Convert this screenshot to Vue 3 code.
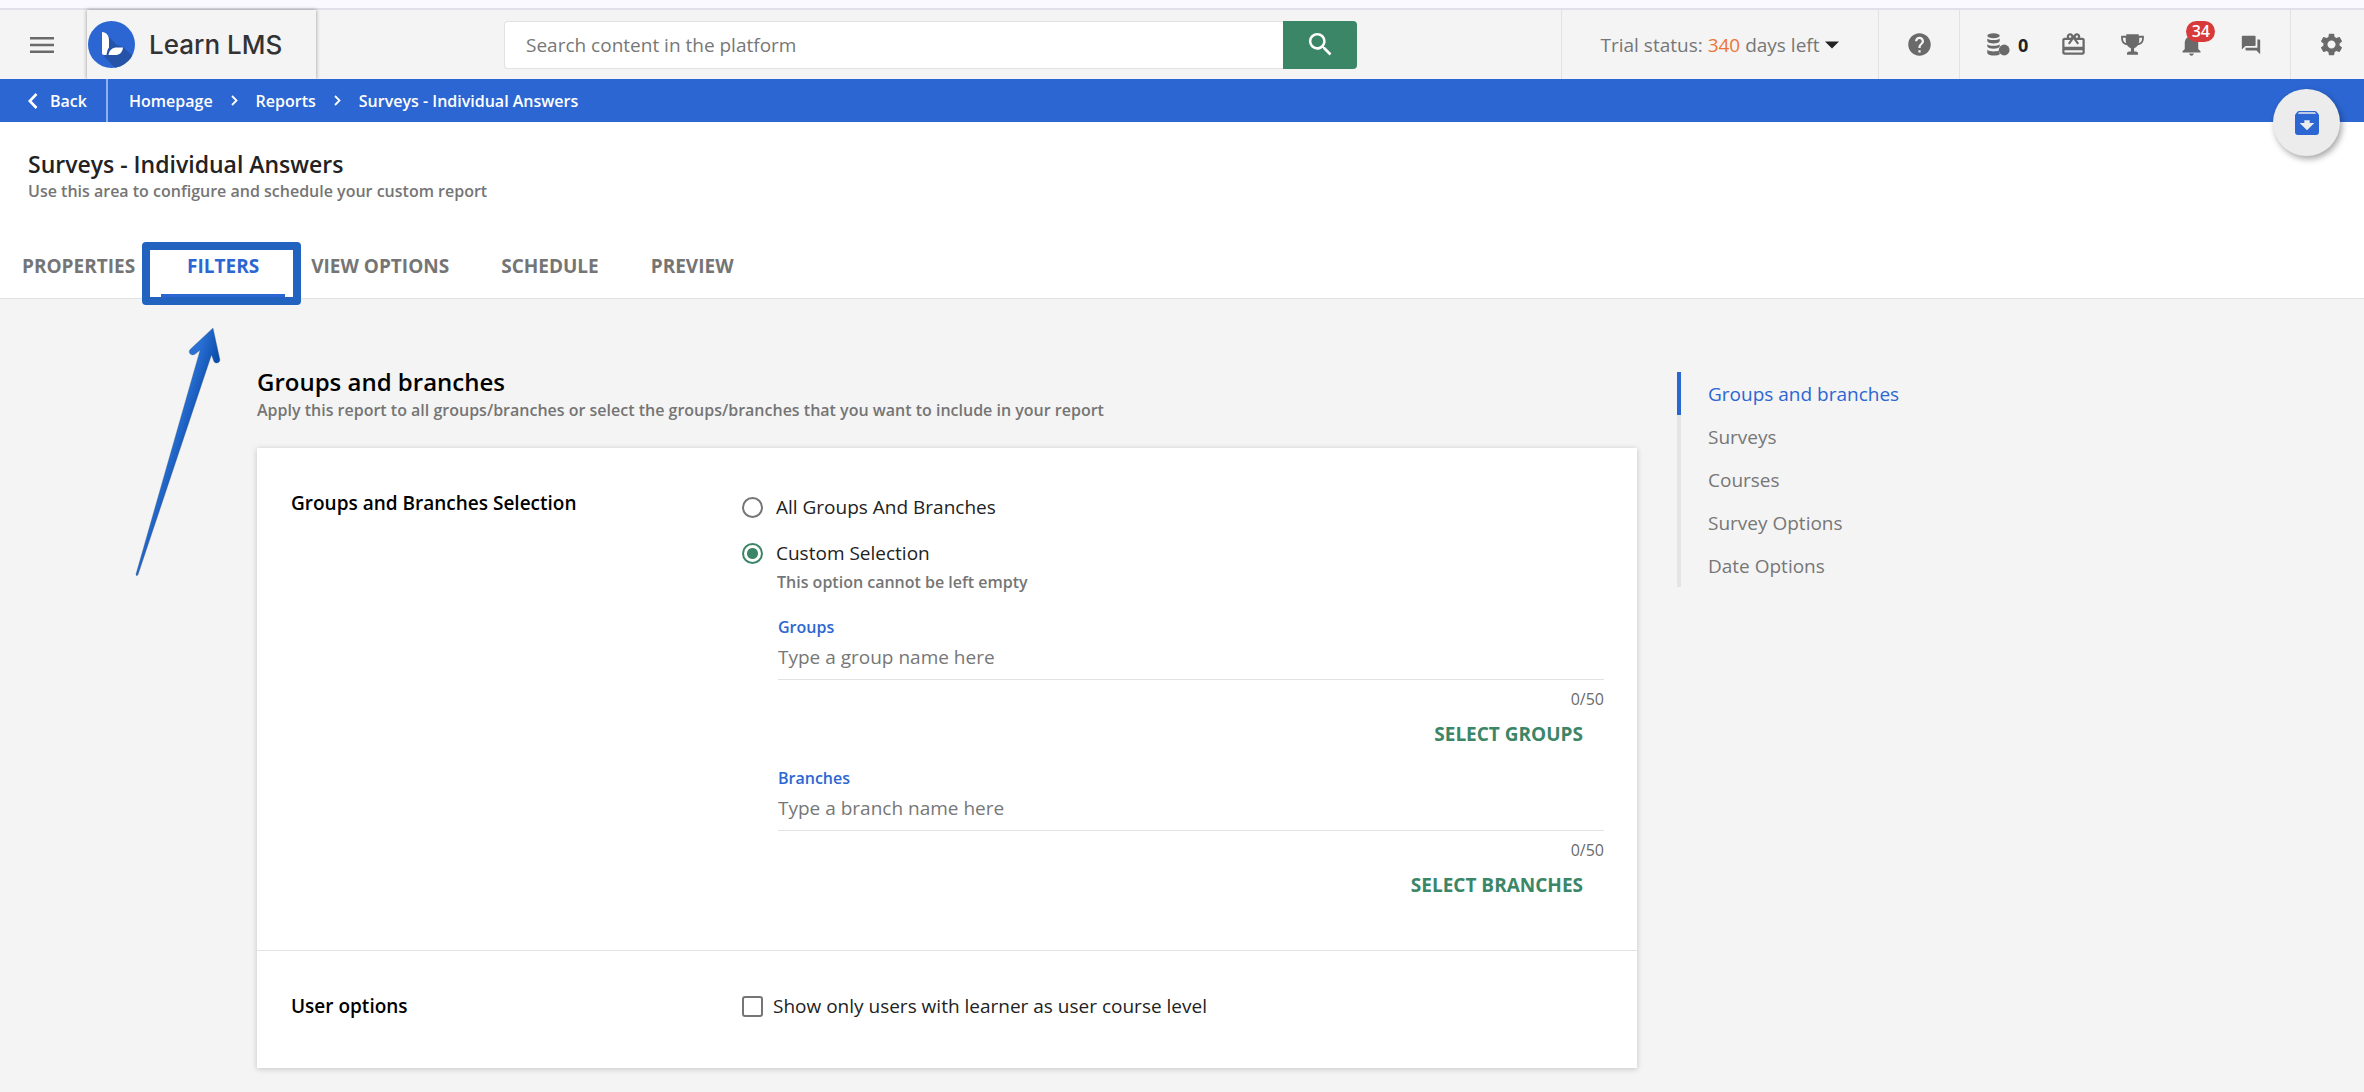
<script setup>
import { ref } from 'vue'

const tabs = ['Properties', 'Filters', 'View options', 'Schedule', 'Preview']
const activeTab = ref('Filters')

const sections = ['Groups and branches', 'Surveys', 'Courses', 'Survey Options', 'Date Options']
const activeSection = ref('Groups and branches')

const selection = ref('custom')
const learnersOnly = ref(false)

const pickers = [
  { id: 'groups', label: 'Groups', placeholder: 'Type a group name here', action: 'Select groups' },
  { id: 'branches', label: 'Branches', placeholder: 'Type a branch name here', action: 'Select branches' },
]
</script>

<template>
  <div class="page">
    <div class="strip"></div>

    <header class="topbar">
      <button class="icon-btn menu" type="button" aria-label="Menu">
        <svg width="24" height="16" viewBox="0 0 24 16"><path d="M0 1.3h24M0 8h24M0 14.7h24" stroke="#6a6a6a" stroke-width="2.4" /></svg>
      </button>
      <a class="logo" href="#">
        <svg width="47" height="47" viewBox="0 0 47 47" aria-hidden="true">
          <defs><clipPath id="disc"><circle cx="23.500" cy="23.500" r="23.500" /></clipPath></defs>
          <circle cx="23.500" cy="23.500" r="23.500" fill="#2c66d2" />
          <path clip-path="url(#disc)" d="M20 15l9 9 6 2 12 11-18 12-14-15z" fill="#2453a8" />
          <path d="M14 11c4.500.5 7 3.500 7 8v7.500c-1.500 2-2 4-2.500 7.500H16c-1.500 0-2-.8-2-2z" fill="#fff" />
          <path d="M20.500 34c.5-5 4-7.500 8.500-7.500h6c-.5 5-3.500 7.500-8 7.500z" fill="#fff" />
        </svg>
        <span>Learn LMS</span>
      </a>

      <form class="search" role="search" @submit.prevent>
        <input type="text" placeholder="Search content in the platform" aria-label="Search content in the platform" />
        <button type="submit" aria-label="Search">
          <svg width="31" height="31" viewBox="0 0 24 24"><path fill="#fff" d="M15.500 14h-.79l-.28-.27A6.471 6.471 0 0 0 16 9.500 6.500 6.500 0 1 0 9.500 16c1.610 0 3.090-.59 4.230-1.570l.27.28v.79l5 4.990L20.490 19l-4.990-5zm-6 0C7.010 14 5 11.990 5 9.500S7.010 5 9.500 5 14 7.010 14 9.500 11.990 14 9.500 14z" /></svg>
        </button>
      </form>

      <div class="tools">
        <button class="tool trial" type="button">
          <span>Trial status: <em>340</em> days left</span>
          <svg width="14" height="8" viewBox="0 0 14 8"><path d="M0 .5h14L7 7.500z" fill="#222" /></svg>
        </button>
        <button class="tool help" type="button" aria-label="Help">
          <svg class="glyph" viewBox="0 0 24 24"><path d="M12 2C6.480 2 2 6.480 2 12s4.480 10 10 10 10-4.480 10-10S17.520 2 12 2zm1 17h-2v-2h2v2zm2.070-7.750l-.9.92C13.450 12.900 13 13.500 13 15h-2v-.5c0-1.100.45-2.100 1.170-2.830l1.240-1.260c.37-.36.59-.86.59-1.410 0-1.100-.9-2-2-2s-2 .9-2 2H8c0-2.210 1.790-4 4-4s4 1.790 4 4c0 .88-.36 1.680-.93 2.250z" /></svg>
        </button>
        <div class="tool icons">
          <button class="icon-btn coins" type="button" aria-label="Coins">
            <svg width="23" height="23" viewBox="0 0 23 23" fill="#6a6a6a">
              <ellipse cx="6.500" cy="2.700" rx="6.200" ry="2.500" />
              <path d="M.3 5.600c2 2 10.400 2 12.400 0v2.600c-1.400 2.900-11 2.900-12.400 0zM.3 11.200c2 2 10.400 2 12.400 0v2.200c-1.400 3-11 3-12.400 0zM.3 16.800c2 2 9 2 11.500.7.200 1.600.7 2.700 1.200 3.500-2 2.200-11.500 2.300-12.700-.8z" />
              <circle cx="17.200" cy="17" r="5.400" />
            </svg>
            <b>0</b>
          </button>
          <button class="icon-btn" type="button" aria-label="Rewards">
            <svg class="glyph" viewBox="0 0 24 24"><path d="M20 6h-2.180c.11-.31.18-.65.18-1 0-1.660-1.340-3-3-3-1.050 0-1.960.54-2.500 1.350l-.5.67-.5-.68C10.960 2.540 10.050 2 9 2 7.340 2 6 3.340 6 5c0 .35.07.69.18 1H4c-1.110 0-1.990.89-1.990 2L2 19c0 1.110.89 2 2 2h16c1.110 0 2-.89 2-2V8c0-1.110-.89-2-2-2zm-5-2c.55 0 1 .45 1 1s-.45 1-1 1-1-.45-1-1 .45-1 1-1zM9 4c.55 0 1 .45 1 1s-.45 1-1 1-1-.45-1-1 .45-1 1-1zm11 15H4v-2h16v2zm0-5H4V8h5.080L7 10.830 8.620 12 11 8.760l1-1.360 1 1.360L15.380 12 17 10.830 14.920 8H20v6z" /></svg>
          </button>
          <button class="icon-btn" type="button" aria-label="Leaderboard">
            <svg class="glyph" viewBox="0 0 24 24">
              <path d="M6.500 2.800h11v1.500h4.600v2.200c0 3.600-2.400 6-5.400 6.200-.8 1.300-1.900 2.200-3.300 2.600v2.900h1.500c1.300 0 2 .8 2 2v1H7.100v-1c0-1.200.8-2 2-2h1.500v-2.900c-1.400-.4-2.500-1.300-3.300-2.600-3-.2-5.400-2.600-5.400-6.200V4.300h4.600zM3.500 6v.7c0 2.100 1.100 3.600 2.900 4.200-.4-1.300-.5-3-.4-4.900zm17 0H18c.1 1.900 0 3.600-.4 4.900 1.800-.6 2.900-2.100 2.900-4.200z" />
            </svg>
          </button>
          <button class="icon-btn bell" type="button" aria-label="Notifications">
            <svg class="glyph" viewBox="0 0 24 24"><path d="M12 22c1.100 0 2-.9 2-2h-4c0 1.100.89 2 2 2zm6-6v-5c0-3.070-1.640-5.640-4.500-6.320V4c0-.83-.67-1.500-1.500-1.500s-1.500.67-1.500 1.500v.68C7.630 5.360 6 7.920 6 11v5l-2 2v1h16v-1l-2-2z" /></svg>
            <span class="badge">34</span>
          </button>
          <button class="icon-btn" type="button" aria-label="Messages">
            <svg class="glyph small" viewBox="0 0 24 24"><path d="M21 6h-2v9H6v2c0 .55.45 1 1 1h11l4 4V7c0-.55-.45-1-1-1zm-4 6V3c0-.55-.45-1-1-1H3c-.55 0-1 .45-1 1v14l4-4h10c.55 0 1-.45 1-1z" /></svg>
          </button>
        </div>
        <button class="tool gear" type="button" aria-label="Settings">
          <svg class="glyph" viewBox="0 0 24 24"><path d="M19.140 12.940c.04-.3.06-.61.06-.94 0-.32-.02-.64-.07-.94l2.030-1.580c.18-.14.23-.41.12-.61l-1.920-3.320c-.12-.22-.37-.29-.59-.22l-2.390.96c-.5-.38-1.030-.7-1.620-.94l-.36-2.540c-.04-.24-.24-.41-.48-.41h-3.840c-.24 0-.43.17-.47.41l-.36 2.540c-.59.24-1.130.57-1.620.94l-2.390-.96c-.22-.08-.47 0-.59.22L2.740 8.870c-.12.21-.08.47.12.61l2.030 1.580c-.05.3-.09.63-.09.94s.02.64.07.94l-2.030 1.580c-.18.14-.23.41-.12.61l1.920 3.320c.12.22.37.29.59.22l2.390-.96c.5.38 1.030.7 1.620.94l.36 2.540c.05.24.24.41.48.41h3.840c.24 0 .44-.17.47-.41l.36-2.540c.59-.24 1.130-.56 1.620-.94l2.390.96c.22.08.47 0 .59-.22l1.920-3.320c.12-.22.07-.47-.12-.61l-2.010-1.580zM12 15.600c-1.980 0-3.600-1.620-3.600-3.600s1.620-3.600 3.600-3.600 3.600 1.620 3.600 3.600-1.620 3.600-3.600 3.600z" /></svg>
        </button>
      </div>
    </header>

    <div class="crumbs">
      <a class="back" href="#">
        <svg width="10" height="16" viewBox="0 0 10 16"><path d="M8.500 1L1.800 8l6.700 7" fill="none" stroke="#fff" stroke-width="2.600" /></svg>
        Back
      </a>
      <nav class="trail" aria-label="Breadcrumb">
        <a href="#">Homepage</a>
        <svg width="7" height="11" viewBox="0 0 7 11"><path d="M1 1l4.500 4.500L1 10" fill="none" stroke="#fff" stroke-width="1.800" /></svg>
        <a href="#">Reports</a>
        <svg width="7" height="11" viewBox="0 0 7 11"><path d="M1 1l4.500 4.500L1 10" fill="none" stroke="#fff" stroke-width="1.800" /></svg>
        <a href="#">Surveys - Individual Answers</a>
      </nav>
      <button class="fab" type="button" aria-label="Archive">
        <svg width="32" height="32" viewBox="0 0 24 24"><path fill="#2c66d2" d="M20.540 5.230l-1.390-1.680C18.880 3.210 18.470 3 18 3H6c-.47 0-.88.21-1.160.55L3.460 5.230C3.170 5.570 3 6.020 3 6.500V19c0 1.100.9 2 2 2h14c1.100 0 2-.9 2-2V6.500c0-.48-.17-.93-.46-1.270zM12 17.500L6.500 12H10v-2h4v2h3.500L12 17.500zM5.120 5l.81-1h12l.94 1H5.120z" /></svg>
      </button>
    </div>

    <section class="heading">
      <h1>Surveys - Individual Answers</h1>
      <p>Use this area to configure and schedule your custom report</p>
      <nav class="tabs">
        <a
          v-for="tab in tabs"
          :key="tab"
          href="#"
          :class="{ active: tab === activeTab }"
          @click.prevent="activeTab = tab"
        >
          {{ tab }}
          <template v-if="tab === 'Filters'">
            <span class="marker"></span>
            <svg class="arrow" width="88" height="256" viewBox="0 0 88 256" aria-hidden="true">
              <defs>
                <linearGradient id="shaft" gradientUnits="userSpaceOnUse" x1="42" y1="100" x2="62" y2="106">
                  <stop offset="0" stop-color="#2a70d4" />
                  <stop offset="1" stop-color="#0a4cac" />
                </linearGradient>
              </defs>
              <path d="M79 4L56.500 25c-3.500 3.500.5 7.500 4.500 5.200l5-4L2 250c-.4 2 1.500 2.300 2.100.6L77.500 31l2.200 6c1.300 3.500 6.500 2.400 6.200-1.500z" fill="url(#shaft)" stroke="#5b6470" stroke-opacity=".5" stroke-width=".6" />
            </svg>
          </template>
        </a>
      </nav>
    </section>

    <main class="main">
      <div class="content">
        <h2>Groups and branches</h2>
        <p class="lead">Apply this report to all groups/branches or select the groups/branches that you want to include in your report</p>

        <div class="card">
          <div class="row groups">
            <h3>Groups and Branches Selection</h3>
            <div class="controls choices">
              <label class="option">
                <input v-model="selection" type="radio" name="selection" value="all" />
                All Groups And Branches
              </label>
              <label class="option">
                <input v-model="selection" type="radio" name="selection" value="custom" />
                Custom Selection
              </label>
              <p class="hint">This option cannot be left empty</p>
              <div v-for="picker in pickers" :key="picker.id" class="picker">
                <label :for="picker.id">{{ picker.label }}</label>
                <input :id="picker.id" type="text" :placeholder="picker.placeholder" />
                <span class="count">0/50</span>
                <button type="button">{{ picker.action }}</button>
              </div>
            </div>
          </div>
          <div class="row">
            <h3>User options</h3>
            <div class="controls">
              <label class="option check">
                <input v-model="learnersOnly" type="checkbox" />
                Show only users with learner as user course level
              </label>
            </div>
          </div>
        </div>
      </div>

      <nav class="side" aria-label="Sections">
        <a
          v-for="item in sections"
          :key="item"
          href="#"
          :class="{ active: item === activeSection }"
          @click.prevent="activeSection = item"
        >{{ item }}</a>
      </nav>
    </main>
  </div>
</template>

<style>
body {
  background: #f4f4f4;
}
</style>

<style scoped>
.page,
.page * {
  box-sizing: border-box;
}

.page {
  min-height: 100vh;
  background: #f4f4f4;
  color: #222;
  font-family: "Open Sans", "Noto Sans", sans-serif;
  font-size: 19px;
}

h1,
h2,
h3,
p {
  margin: 0;
}

a {
  color: inherit;
  text-decoration: none;
}

button {
  margin: 0;
  padding: 0;
  border: 0;
  background: none;
  color: inherit;
  font: inherit;
  cursor: pointer;
}

input {
  font: inherit;
}

svg {
  display: block;
  flex: none;
}

.strip {
  height: 10px;
  background: #f9f9ff;
  border-bottom: 2px solid #e0e0ea;
}

/* Top bar */
.topbar {
  display: flex;
  align-items: center;
  height: 69px;
}

.icon-btn {
  display: flex;
  align-items: center;
  justify-content: center;
  min-width: 27px;
  height: 27px;
}

.menu {
  margin: 0 32px 0 28px;
}

.logo {
  display: flex;
  align-items: center;
  gap: 14px;
  width: 229px;
  height: 69px;
  padding-left: 1px;
  box-shadow: 0 0 4px rgba(0, 0, 0, 0.4);
  color: #333;
  font-family: Inter, sans-serif;
  font-size: 26px;
  font-weight: 500;
}

.search {
  display: flex;
  flex: 1;
  height: 48px;
  margin: 0 204px 0 188px;
}

.search input {
  flex: 1;
  min-width: 0;
  padding: 0 21px;
  border: 1px solid #e2e2e2;
  border-right: 0;
  border-radius: 4px 0 0 4px;
  background: #fff;
  outline: none;
}

input::placeholder {
  color: #777;
  opacity: 1;
}

.search button {
  display: flex;
  align-items: center;
  justify-content: center;
  width: 74px;
  border-radius: 0 4px 4px 0;
  background: #3c8668;
}

.tools {
  display: flex;
  flex: none;
  height: 69px;
}

.tool {
  display: flex;
  align-items: center;
  justify-content: center;
  border-left: 1px solid #e2e2e2;
}

.trial {
  gap: 6px;
  width: 317px;
  color: #777;
}

.trial em {
  color: #ec7436;
  font-style: normal;
}

.help {
  width: 81px;
}

.icons {
  justify-content: flex-start;
  gap: 32px;
  width: 331px;
  padding-left: 27px;
}

.gear {
  justify-content: flex-start;
  width: 74px;
  padding-left: 27px;
}

.glyph {
  width: 27px;
  height: 27px;
  fill: #6a6a6a;
}

.glyph.small {
  width: 22px;
  height: 22px;
}

.coins {
  gap: 8px;
}

.coins b {
  color: #222;
  font-size: 18px;
  font-weight: 700;
}

.bell {
  position: relative;
}

.badge {
  position: absolute;
  top: -10px;
  left: 8px;
  width: 29px;
  height: 21px;
  border-radius: 11px;
  background: #d63a3a;
  color: #fff;
  font-size: 16px;
  font-weight: 600;
  line-height: 21px;
  text-align: center;
}

/* Breadcrumb bar */
.crumbs {
  position: relative;
  display: flex;
  height: 43px;
  background: #2c66d2;
  color: #fff;
  font-size: 16px;
  font-weight: 600;
}

.back {
  display: flex;
  align-items: center;
  gap: 12px;
  width: 108px;
  padding-left: 28px;
  border-right: 2px solid #8eb0ee;
}

.trail {
  display: flex;
  align-items: center;
  gap: 18px;
  padding-left: 21px;
}

.fab {
  position: absolute;
  top: 10px;
  right: 24px;
  z-index: 1;
  display: flex;
  align-items: center;
  justify-content: center;
  width: 67px;
  height: 67px;
  border-radius: 50%;
  background: #ececec;
  box-shadow: 2px 3px 6px rgba(0, 0, 0, 0.35);
}

/* Page heading */
.heading {
  padding: 26px 28px 0;
  border-bottom: 1px solid #e2e2e2;
  background: #fff;
}

h1 {
  font-size: 23px;
  font-weight: 600;
  line-height: 32px;
}

.heading p {
  color: #757575;
  font-size: 16px;
  font-weight: 600;
  line-height: 22px;
}

.tabs {
  display: flex;
  margin: 31px 0 0 -32px;
}

.tabs a {
  position: relative;
  height: 65px;
  padding: 0 26px;
  color: #757575;
  font-weight: 700;
  line-height: 67px;
  text-transform: uppercase;
}

.tabs .active {
  border-bottom: 4px solid #2c66d2;
  color: #2c66d2;
}

.marker {
  position: absolute;
  top: 9px;
  right: -16px;
  left: -19px;
  height: 63px;
  border: 8px solid #2163bf;
  border-radius: 4px;
}

.arrow {
  position: absolute;
  top: 91px;
  left: -27px;
}

/* Body */
.main {
  display: grid;
  grid-template-columns: minmax(0, 1fr) 430px;
  gap: 40px;
  padding: 67px 257px 24px;
}

h2 {
  color: #000;
  font-size: 24px;
  font-weight: 600;
  line-height: 32px;
}

.lead {
  color: #757575;
  font-size: 16px;
  font-weight: 600;
  line-height: 24px;
}

.card {
  margin-top: 26px;
  background: #fff;
  box-shadow: 0 1px 6px rgba(0, 0, 0, 0.2);
}

.row {
  display: grid;
  grid-template-columns: 1fr 2fr;
  gap: 20px;
  padding: 42px 33px 49px 34px;
}

.row.groups {
  padding-bottom: 45px;
}

.row + .row {
  border-top: 1px solid #e2e2e2;
}

h3 {
  color: #000;
  font-size: 19px;
  font-weight: 600;
  line-height: 26px;
}

.choices {
  padding-top: 4px;
}

.option {
  display: flex;
  align-items: center;
  gap: 13px;
  line-height: 26px;
}

.option.check {
  gap: 10px;
}

.option + .option {
  margin-top: 20px;
}

.option input {
  width: 21px;
  height: 21px;
  margin: 0;
  border: 2px solid #757575;
  appearance: none;
}

.option input[type="radio"] {
  border-radius: 50%;
}

.option input[type="checkbox"] {
  border-radius: 3px;
}

.option input[type="radio"]:checked {
  border-color: #3c8668;
  background: radial-gradient(circle, #3c8668 5px, #fff 6px);
}

.option input[type="checkbox"]:checked {
  background: #3c8668;
}

.hint {
  margin: 5px 0 23px;
  padding-left: 35px;
  color: #757575;
  font-size: 16px;
  font-weight: 600;
  line-height: 22px;
}

.picker {
  display: flex;
  flex-direction: column;
  padding-left: 36px;
}

.picker + .picker {
  margin-top: 13px;
}

.picker label {
  color: #2c66d2;
  font-size: 16px;
  font-weight: 600;
  line-height: 22px;
}

.picker input {
  height: 42px;
  padding: 0 0 4px;
  border: 0;
  border-bottom: 1px solid #e2e2e2;
  background: none;
  outline: none;
}

.count {
  margin-top: 8px;
  color: #6a6a6a;
  font-size: 16px;
  font-weight: 500;
  line-height: 22px;
  text-align: right;
}

.picker button {
  align-self: flex-end;
  height: 40px;
  margin-top: 4px;
  padding: 0 21px;
  color: #3c8668;
  font-weight: 700;
  text-transform: uppercase;
}

/* Section index */
.side {
  display: flex;
  flex-direction: column;
  align-self: start;
  padding-top: 6px;
}

.side a {
  height: 43px;
  padding-left: 27px;
  border-left: 4px solid #e4e6e5;
  color: #777;
  line-height: 45px;
}

.side .active {
  border-color: #2c66d2;
  color: #2c66d2;
}
</style>
